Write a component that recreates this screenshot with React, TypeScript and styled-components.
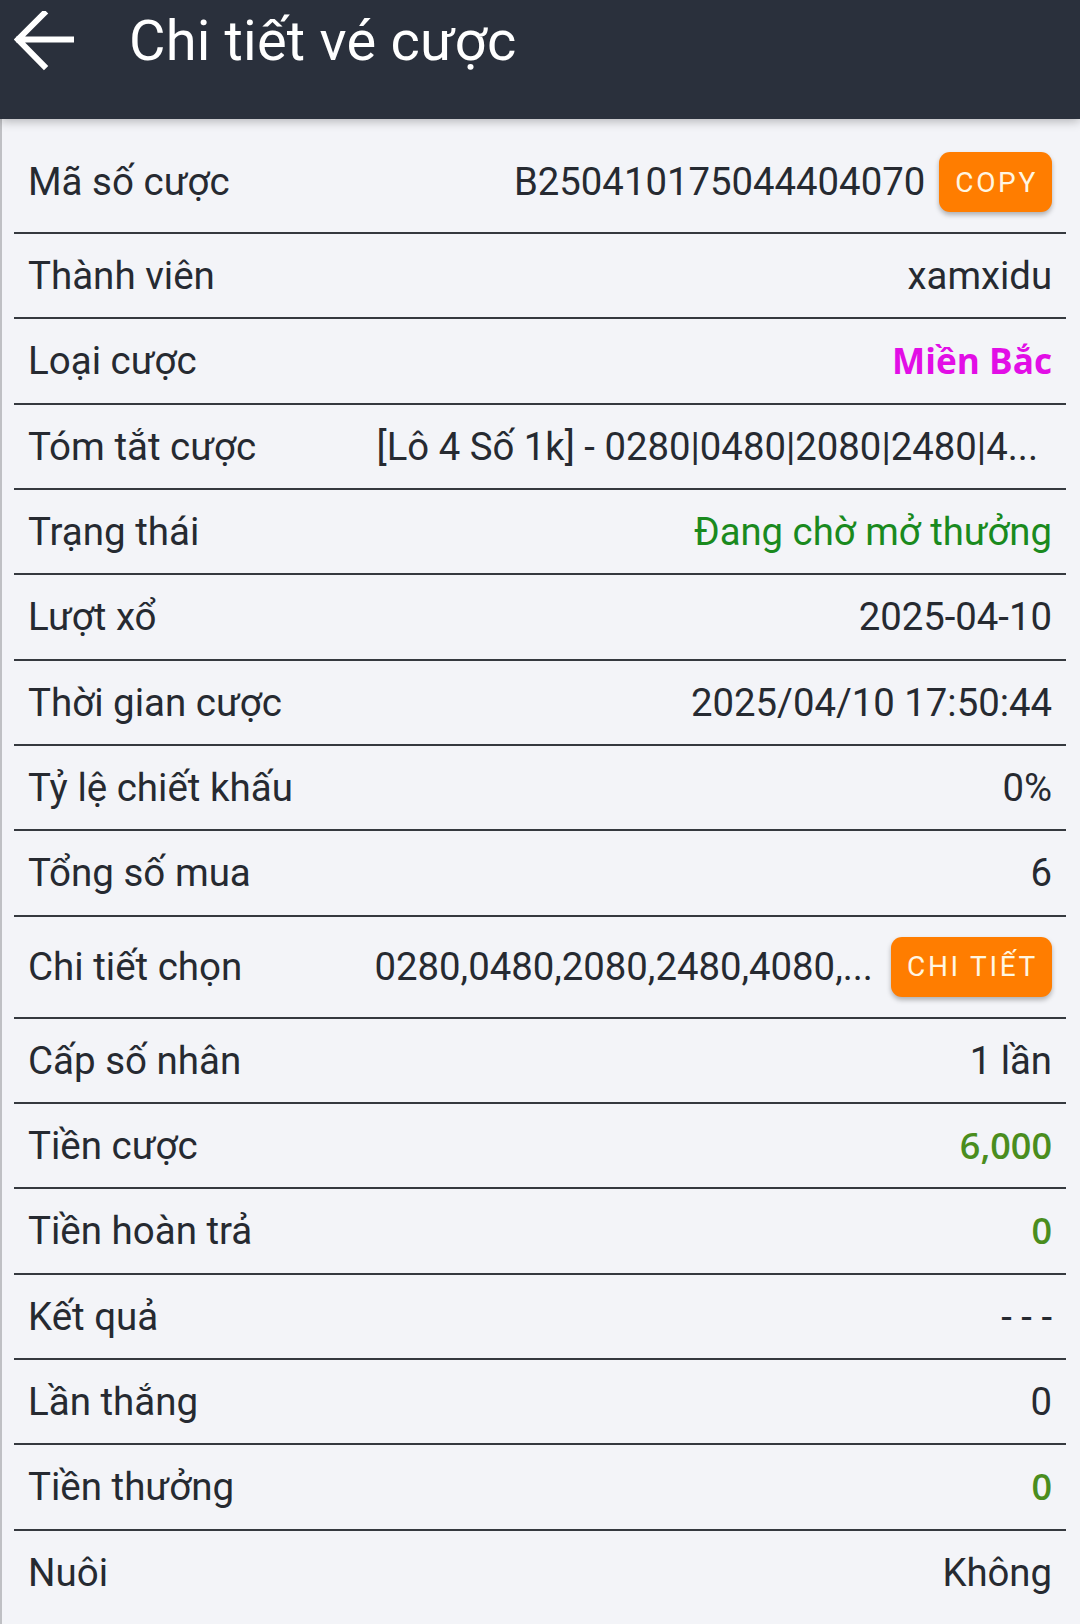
import React from "react";
import styled, { createGlobalStyle } from "styled-components";

const GlobalStyle = createGlobalStyle`
  html, body {
    margin: 0;
    padding: 0;
    background: #f3f4f8;
  }
  body {
    font-family: Roboto, "Noto Sans", Arial, sans-serif;
  }
  * { box-sizing: border-box; }
`;

const Page = styled.div`
  width: 1080px;
  min-height: 1624px;
  background: #f3f4f8;
  display: flex;
  flex-direction: column;
`;

const Header = styled.header`
  height: 119px;
  background: #2a303c;
  display: flex;
  align-items: flex-start;
  position: relative;
  z-index: 2;
  box-shadow: 0 2px 10px rgba(0, 0, 0, 0.28);
`;

const HeaderBar = styled.div`
  height: 82px;
  display: flex;
  align-items: center;
  padding-left: 14px;
`;

const BackButton = styled.button`
  width: 60px;
  height: 60px;
  padding: 0;
  border: none;
  background: transparent;
  display: flex;
  align-items: center;
  justify-content: center;
  margin-right: 55px;
  cursor: pointer;
`;

const Title = styled.h1`
  margin: 0;
  font-family: Roboto, sans-serif;
  font-weight: 400;
  font-size: 56px;
  color: #ffffff;
  letter-spacing: 0.2px;
`;

const Main = styled.main`
  flex: 1;
  border-left: 2px solid #bfc0c4;
  padding: 13px 14px 0 12px;
`;

const Row = styled.div<{ last?: boolean }>`
  display: flex;
  align-items: center;
  justify-content: space-between;
  padding: 20px 14px;
  border-bottom: ${(p) => (p.last ? "none" : "2px solid #35393f")};
  gap: 16px;
`;

const Label = styled.span`
  font-family: Roboto, sans-serif;
  font-size: 38.5px;
  line-height: 43.35px;
  color: #262a31;
  white-space: nowrap;
  flex-shrink: 0;
`;

type Tone = "plain" | "magenta" | "status" | "money";

const Value = styled.span<{ tone?: Tone }>`
  font-family: ${(p) =>
    p.tone === "magenta" || p.tone === "money"
      ? '"Open Sans", "Noto Sans", sans-serif'
      : "Roboto, sans-serif"};
  font-weight: ${(p) => (p.tone === "magenta" ? 700 : p.tone === "money" ? 600 : 400)};
  font-size: ${(p) =>
    p.tone === "magenta" ? "35.2px" : p.tone === "money" ? "36px" : "38.3px"};
  line-height: 43.35px;
  color: ${(p) =>
    p.tone === "magenta"
      ? "#e20ee6"
      : p.tone === "status"
      ? "#1a8a1e"
      : p.tone === "money"
      ? "#4a8d1e"
      : "#262a31"};
  white-space: nowrap;
  text-align: right;
`;

const Truncated = styled(Value)`
  margin-right: 14px;
`;

const ValueGroup = styled.div<{ gap?: number }>`
  display: flex;
  align-items: center;
  gap: ${(p) => p.gap ?? 14}px;
`;

const ActionButton = styled.button`
  height: 60px;
  padding: 0 14px 0 16px;
  border: none;
  border-radius: 11px;
  background: #ff7d00;
  color: #fff6e2;
  font-family: Roboto, sans-serif;
  font-weight: 400;
  font-size: 28px;
  letter-spacing: 2.7px;
  box-shadow: 0 3px 5px rgba(0, 0, 0, 0.28);
  cursor: pointer;
`;

const BackArrow = () => (
  <svg width="60" height="60" viewBox="0 0 60 60" fill="none">
    <path
      d="M58 28.5H5M30 2.5L4 28.5L30 55"
      stroke="#ffffff"
      strokeWidth="6"
      strokeLinecap="square"
    />
  </svg>
);

const rows: { label: string; value: string; tone?: Tone }[] = [
  { label: "Thành viên", value: "xamxidu" },
  { label: "Loại cược", value: "Miền Bắc", tone: "magenta" },
];

const rows2: { label: string; value: string; tone?: Tone }[] = [
  { label: "Trạng thái", value: "Đang chờ mở thưởng", tone: "status" },
  { label: "Lượt xổ", value: "2025-04-10" },
  { label: "Thời gian cược", value: "2025/04/10 17:50:44" },
  { label: "Tỷ lệ chiết khấu", value: "0%" },
  { label: "Tổng số mua", value: "6" },
];

const rows3: { label: string; value: string; tone?: Tone }[] = [
  { label: "Cấp số nhân", value: "1 lần" },
  { label: "Tiền cược", value: "6,000", tone: "money" },
  { label: "Tiền hoàn trả", value: "0", tone: "money" },
  { label: "Kết quả", value: "- - -" },
  { label: "Lần thắng", value: "0" },
  { label: "Tiền thưởng", value: "0", tone: "money" },
];

export default function App() {
  return (
    <Page>
      <GlobalStyle />
      <Header>
        <HeaderBar>
          <BackButton aria-label="Quay lại">
            <BackArrow />
          </BackButton>
          <Title>Chi tiết vé cược</Title>
        </HeaderBar>
      </Header>
      <Main>
        <Row>
          <Label>Mã số cược</Label>
          <ValueGroup gap={14}>
            <Value>B250410175044404070</Value>
            <ActionButton>COPY</ActionButton>
          </ValueGroup>
        </Row>
        {rows.map((r) => (
          <Row key={r.label}>
            <Label>{r.label}</Label>
            <Value tone={r.tone}>{r.value}</Value>
          </Row>
        ))}
        <Row>
          <Label>Tóm tắt cược</Label>
          <Truncated>[Lô 4 Số 1k] - 0280|0480|2080|2480|4...</Truncated>
        </Row>
        {rows2.map((r) => (
          <Row key={r.label}>
            <Label>{r.label}</Label>
            <Value tone={r.tone}>{r.value}</Value>
          </Row>
        ))}
        <Row>
          <Label>Chi tiết chọn</Label>
          <ValueGroup gap={18}>
            <Value>0280,0480,2080,2480,4080,...</Value>
            <ActionButton>CHI TIẾT</ActionButton>
          </ValueGroup>
        </Row>
        {rows3.map((r) => (
          <Row key={r.label}>
            <Label>{r.label}</Label>
            <Value tone={r.tone}>{r.value}</Value>
          </Row>
        ))}
        <Row last>
          <Label>Nuôi</Label>
          <Value>Không</Value>
        </Row>
      </Main>
    </Page>
  );
}
